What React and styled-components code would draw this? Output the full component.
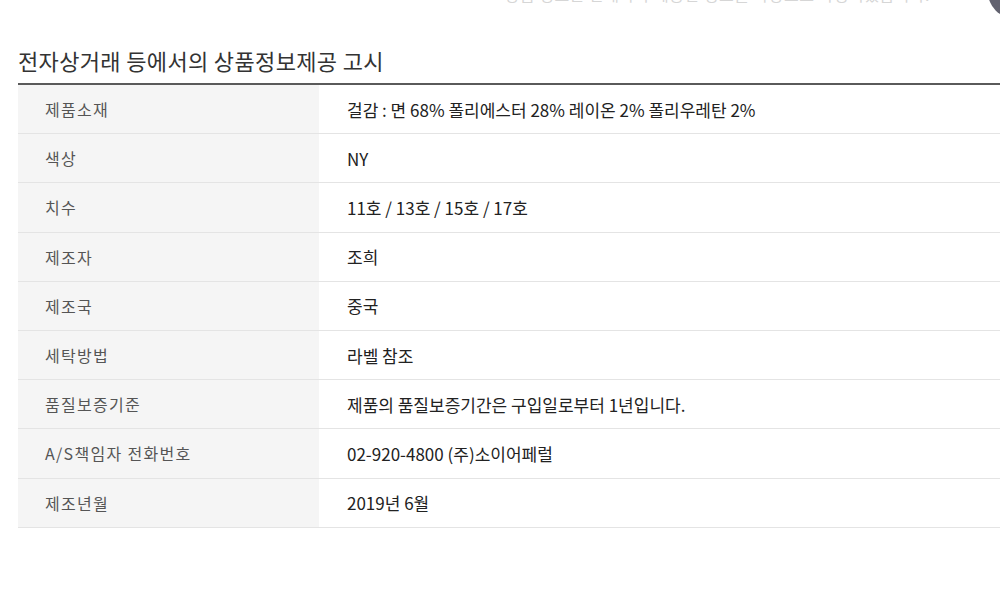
import React from "react";
import styled, { createGlobalStyle } from "styled-components";

const Global = createGlobalStyle`
  html, body { margin: 0; padding: 0; background: #fff; }
  body {
    font-family: "Noto Sans CJK KR", "Noto Sans", "Liberation Sans", sans-serif;
    overflow: hidden;
  }
`;

const Page = styled.div`
  position: relative;
  width: 1000px;
  height: 602px;
  overflow: hidden;
  background: #fff;
`;

const ClippedNote = styled.div`
  display: flex;
  justify-content: flex-end;
  padding-right: 70px;
  margin-top: -16px;
  height: 20px;
  font-size: 16px;
  line-height: 20px;
  color: #d6d6d6;
  letter-spacing: 0.5px;
`;

const FloatButton = styled.div`
  position: absolute;
  top: -34px;
  right: -40px;
  width: 52px;
  height: 52px;
  border-radius: 50%;
  background: #62626f;
`;

const Section = styled.section`
  padding: 0 0 0 18px;
`;

const Title = styled.h2`
  margin: 37px 0 0;
  height: 38px;
  font-size: 22px;
  font-weight: 400;
  line-height: 38px;
  color: #333;
  letter-spacing: 0.35px;
`;

const Table = styled.div`
  margin-top: 4px;
  border-top: 2px solid #5a5a5a;
  display: grid;
  grid-template-columns: 301px 1fr;
`;

const Label = styled.div`
  height: 48.2px;
  border-bottom: 1px solid #e4e4e4;
  background: #f5f5f5;
  display: flex;
  align-items: center;
  padding-left: 27px;
  font-size: 16px;
  color: #555;
  letter-spacing: 1.3px;
`;

const Value = styled.div`
  height: 48.2px;
  border-bottom: 1px solid #e4e4e4;
  background: #fff;
  display: flex;
  align-items: center;
  padding-left: 28px;
  font-size: 17px;
  color: #222;
  letter-spacing: 0;
`;

const rows = [
  ["제품소재", "걸감 : 면 68% 폴리에스터 28% 레이온 2% 폴리우레탄 2%"],
  ["색상", "NY"],
  ["치수", "11호 / 13호 / 15호 / 17호"],
  ["제조자", "조희"],
  ["제조국", "중국"],
  ["세탁방법", "라벨 참조"],
  ["품질보증기준", "제품의 품질보증기간은 구입일로부터 1년입니다."],
  ["A/S책임자 전화번호", "02-920-4800 (주)소이어페럴"],
  ["제조년월", "2019년 6월"],
];

export default function App() {
  return (
    <Page>
      <Global />
      <ClippedNote>상품 정보는 판매자가 제공한 정보를 바탕으로 작성되었습니다.</ClippedNote>
      <FloatButton />
      <Section>
        <Title>전자상거래 등에서의 상품정보제공 고시</Title>
        <Table>
          {rows.map(([k, v]) => (
            <React.Fragment key={k}>
              <Label>{k}</Label>
              <Value>{v}</Value>
            </React.Fragment>
          ))}
        </Table>
      </Section>
    </Page>
  );
}
